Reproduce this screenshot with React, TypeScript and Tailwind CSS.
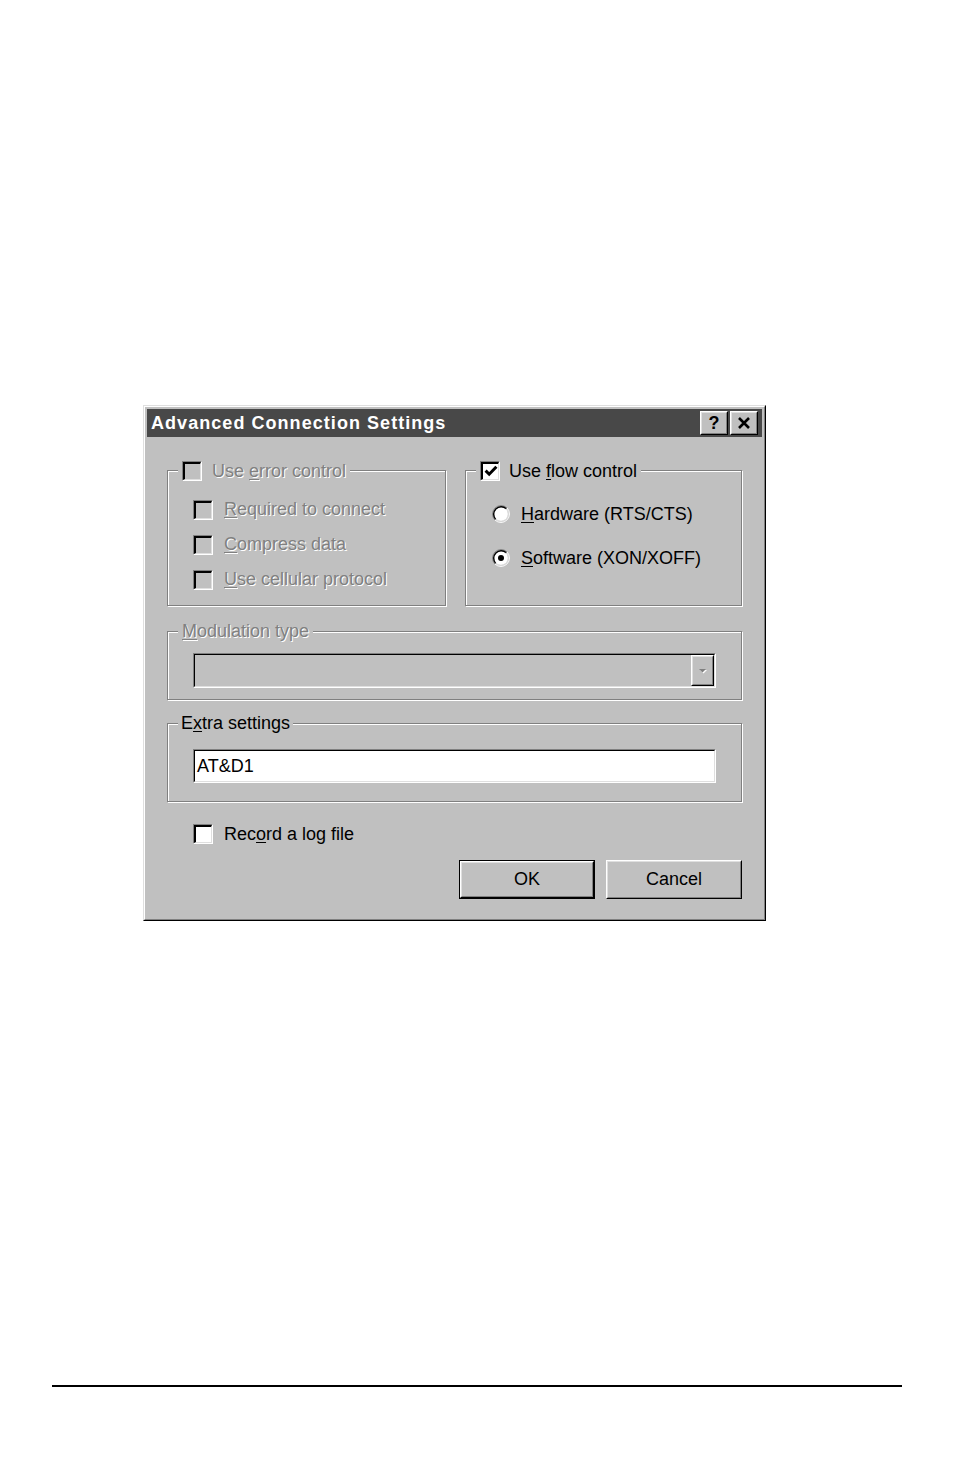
import React from 'react';

const FONT = "font-['Liberation_Sans',Arial,Helvetica,sans-serif]";
const DISABLED = 'text-[#808080] [text-shadow:1px_1px_0_#ffffff]';

function Mnemonic({ text, at, disabled }: { text: string; at: number; disabled?: boolean }) {
  return (
    <span className={`whitespace-nowrap text-[18px] leading-[21px] ${disabled ? DISABLED : 'text-black'}`}>
      {text.slice(0, at)}
      <span className="underline underline-offset-[2px]">{text[at]}</span>
      {text.slice(at + 1)}
    </span>
  );
}

function CheckBox({ checked, disabled }: { checked?: boolean; disabled?: boolean }) {
  return (
    <span className="block w-[20px] h-[20px] shrink-0 border border-t-[#808080] border-l-[#808080] border-r-white border-b-white">
      <span
        className={`flex items-center justify-center w-full h-full border-t-2 border-l-2 border-r border-b border-t-black border-l-black border-r-[#dfdfdf] border-b-[#dfdfdf] ${
          disabled ? 'bg-[#c0c0c0]' : 'bg-white'
        }`}
      >
        {checked && (
          <svg width="14" height="14" viewBox="0 0 14 14">
            <path d="M1.6 6.6 L5.2 10.2 L12.4 2.8" stroke="#000" strokeWidth="3" fill="none" />
          </svg>
        )}
      </span>
    </span>
  );
}

function Radio({ selected }: { selected?: boolean }) {
  return (
    <svg width="18" height="18" viewBox="0 0 18 18" className="shrink-0">
      <circle cx="9" cy="9" r="7" fill="#fff" />
      <path d="M2.99 15.01 A8.5 8.5 0 0 1 15.01 2.99" stroke="#808080" strokeWidth="1" fill="none" />
      <path d="M15.01 2.99 A8.5 8.5 0 0 1 2.99 15.01" stroke="#fff" strokeWidth="1" fill="none" />
      <path d="M3.7 14.3 A7.5 7.5 0 0 1 14.3 3.7" stroke="#000" strokeWidth="1.4" fill="none" />
      <path d="M14.3 3.7 A7.5 7.5 0 0 1 3.7 14.3" stroke="#dfdfdf" strokeWidth="1" fill="none" />
      {selected && <circle cx="9" cy="9" r="3" fill="#000" />}
    </svg>
  );
}

function Raised({ className, children, inner = '' }: { className?: string; children?: React.ReactNode; inner?: string }) {
  return (
    <div className={`border border-t-white border-l-white border-r-black border-b-black bg-[#c0c0c0] ${className ?? ''}`}>
      <div
        className={`w-full h-full flex items-center justify-center border border-t-[#dfdfdf] border-l-[#dfdfdf] border-r-[#808080] border-b-[#808080] ${inner}`}
      >
        {children}
      </div>
    </div>
  );
}

function Sunken({ className, children, inner = '' }: { className?: string; children?: React.ReactNode; inner?: string }) {
  return (
    <div className={`border border-t-[#808080] border-l-[#808080] border-r-white border-b-white ${className ?? ''}`}>
      <div className={`w-full h-full border border-t-black border-l-black border-r-[#dfdfdf] border-b-[#dfdfdf] ${inner}`}>
        {children}
      </div>
    </div>
  );
}

const GROUP =
  'min-w-0 p-0 m-0 border border-[#808080] shadow-[1px_1px_0_#ffffff,inset_1px_1px_0_#ffffff]';

export default function App() {
  return (
    <div className={`w-[954px] h-[1475px] bg-white overflow-hidden pt-[405px] ${FONT}`}>
      {/* dialog window */}
      <div className="ml-[143px] w-[623px] border border-t-[#dfdfdf] border-l-[#dfdfdf] border-r-black border-b-black bg-[#c0c0c0]">
        <div className="border border-t-white border-l-white border-r-[#808080] border-b-[#808080] p-[2px]">
          {/* title bar */}
          <div className="h-[28px] bg-[#484848] flex items-center justify-between pl-[4px] pr-[4px]">
            <span className="text-white font-bold text-[18px] tracking-[1.05px] whitespace-nowrap">
              Advanced Connection Settings
            </span>
            <div className="flex gap-[2px]">
              <Raised className="w-[28px] h-[24px]">
                <span className="text-black font-bold text-[18px] leading-none">?</span>
              </Raised>
              <Raised className="w-[28px] h-[24px]">
                <svg width="14" height="12" viewBox="0 0 14 12">
                  <path d="M2 1 L12 11 M12 1 L2 11" stroke="#000" strokeWidth="2.6" fill="none" />
                </svg>
              </Raised>
            </div>
          </div>

          {/* body */}
          <div className="px-[20px] pt-[23px] pb-[18px]">
            <div className="grid grid-cols-[279px_1fr] gap-[19px]">
              <fieldset className={`${GROUP} h-[146px]`}>
                <legend className="ml-[10px] px-[4px] bg-[#c0c0c0]">
                  <span className="flex items-center gap-[10px] h-[21px]">
                    <CheckBox disabled />
                    <span className="pt-[2px]">
                      <Mnemonic text="Use error control" at={4} disabled />
                    </span>
                  </span>
                </legend>
                <div className="pl-[25px] pt-[11px]">
                  {[
                    ['Required to connect', 0],
                    ['Compress data', 0],
                    ['Use cellular protocol', 0],
                  ].map(([t, i]) => (
                    <div key={t as string} className="h-[35px] flex items-center gap-[11px]">
                      <CheckBox disabled />
                      <Mnemonic text={t as string} at={i as number} disabled />
                    </div>
                  ))}
                </div>
              </fieldset>

              <fieldset className={`${GROUP} h-[146px]`}>
                <legend className="ml-[10px] px-[4px] bg-[#c0c0c0]">
                  <span className="flex items-center gap-[9px] h-[21px]">
                    <CheckBox checked />
                    <span className="pt-[2px]">
                      <Mnemonic text="Use flow control" at={4} />
                    </span>
                  </span>
                </legend>
                <div className="pl-[26px] pt-[11px]">
                  <div className="h-[44px] flex items-center gap-[11px]">
                    <Radio />
                    <Mnemonic text="Hardware (RTS/CTS)" at={0} />
                  </div>
                  <div className="h-[44px] flex items-center gap-[11px]">
                    <Radio selected />
                    <Mnemonic text="Software (XON/XOFF)" at={0} />
                  </div>
                </div>
              </fieldset>
            </div>

            <fieldset className={`${GROUP} h-[79px] mt-[15px]`}>
              <legend className="ml-[10px] px-[4px] bg-[#c0c0c0] h-[21px] flex items-center">
                <Mnemonic text="Modulation type" at={0} disabled />
              </legend>
              <div className="px-[25px] pt-[11px]">
                <Sunken className="h-[35px]" inner="bg-[#c0c0c0] flex justify-end">
                  <Raised className="w-[23px] h-full">
                    <svg width="9" height="6" viewBox="0 0 9 6">
                      <path d="M2 2 L9 2 L5.5 5.5 Z" fill="#fff" />
                      <path d="M1 1 L8 1 L4.5 4.5 Z" fill="#808080" />
                    </svg>
                  </Raised>
                </Sunken>
              </div>
            </fieldset>

            <fieldset className={`${GROUP} h-[89px] mt-[13px]`}>
              <legend className="ml-[10px] px-[3px] bg-[#c0c0c0] h-[21px] flex items-center">
                <Mnemonic text="Extra settings" at={1} />
              </legend>
              <div className="px-[25px] pt-[15px]">
                <Sunken className="h-[34px]" inner="bg-white flex items-center pl-[2px]">
                  <span className="text-black text-[18px] leading-none">AT&amp;D1</span>
                </Sunken>
              </div>
            </fieldset>

            <div className="mt-[22px] pl-[26px] h-[20px] flex items-center gap-[11px]">
              <CheckBox />
              <Mnemonic text="Record a log file" at={3} />
            </div>

            <div className="mt-[16px] flex justify-end gap-[11px]">
              <div className="w-[136px] h-[39px] border border-black">
                <Raised className="w-full h-full">
                  <span className="text-black text-[18px]">OK</span>
                </Raised>
              </div>
              <Raised className="w-[136px] h-[39px]">
                <span className="text-black text-[18px]">Cancel</span>
              </Raised>
            </div>
          </div>
        </div>
      </div>

      {/* page footer rule */}
      <div className="mt-[464px] ml-[52px] w-[850px] h-[2px] bg-black" />
    </div>
  );
}
